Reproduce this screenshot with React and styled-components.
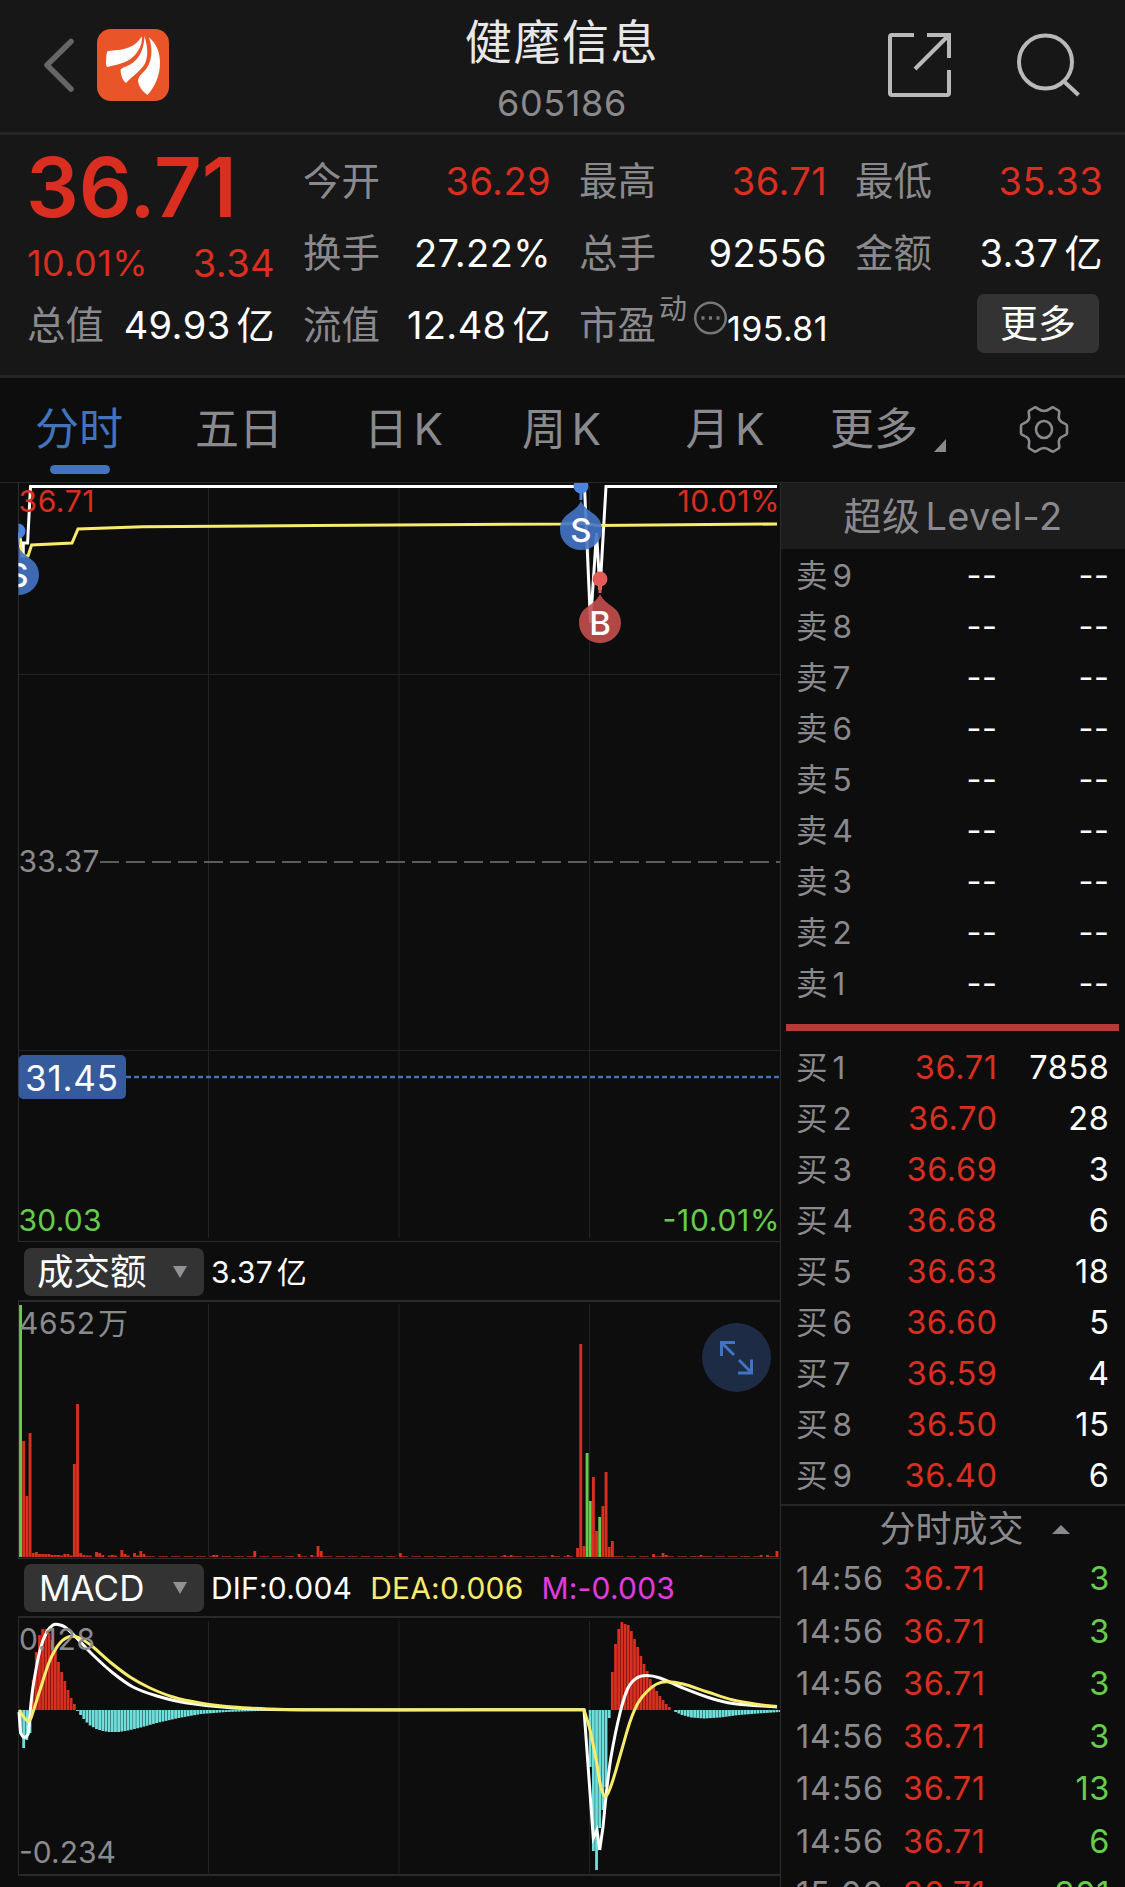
import React from "react";
import styled, { createGlobalStyle } from "styled-components";

const GlobalStyle = createGlobalStyle`
  * {
    box-sizing: border-box;
  }
  body {
    margin: 0;
    background: #0d0d0d;
    font-family: Inter, "Noto Sans CJK SC", sans-serif;
    color: #fff;
    overflow: hidden;
  }
`;

const RED = "#d92e20";
const GREEN = "#65cd4b";
const GRAY = "#8a8a8e";
const BLUE = "#4273bf";
const YELLOW = "#f9eb6c";
const CYAN = "#6fdfdc";
const GRID = "#232323";

const Screen = styled.div`
  width: 1125px;
  height: 1887px;
  overflow: hidden;
  display: flex;
  flex-direction: column;
`;

const Header = styled.header`
  height: 135px;
  flex-shrink: 0;
  display: flex;
  justify-content: space-between;
  background: #171717;
  border-bottom: 3px solid #252525;
  padding: 0 45px 0 44px;
`;
const HeaderSide = styled.div`
  width: 250px;
  display: flex;
  align-items: center;
  padding-bottom: 2px;
  justify-content: ${(props) => (props.$right ? "flex-end" : "flex-start")};
  gap: ${(props) => props.$gap}px;
`;
const TitleBox = styled.div`
  display: flex;
  flex-direction: column;
  align-items: center;
  padding-top: 12px;
`;
const Title = styled.div`
  font-size: 47px;
  line-height: 60px;
  letter-spacing: 1.6px;
  color: #e8e8e8;
`;
const Code = styled.div`
  font-size: 36px;
  line-height: 62px;
  letter-spacing: 0.6px;
  color: ${GRAY};
`;

const Quote = styled.section`
  height: 243px;
  flex-shrink: 0;
  display: grid;
  grid-template-columns: repeat(4, 248px);
  column-gap: 28px;
  background: #171717;
  border-bottom: 3px solid #252525;
  padding: 10px 0 0 27px;
`;
const QuoteColumn = styled.div`
  display: flex;
  flex-direction: column;
`;
const QuoteRow = styled.div`
  height: 72px;
  display: flex;
  align-items: center;
  justify-content: space-between;
  white-space: nowrap;
  word-spacing: -5px;
`;
const Label = styled.span`
  font-size: 38.5px;
  line-height: 72px;
  color: ${GRAY};
`;
const Value = styled.span`
  font-size: ${(props) => props.$size || 38}px;
  line-height: 72px;
  letter-spacing: 0.4px;
  color: ${(props) => props.$color || "#fff"};
`;
const BigPrice = styled.div`
  height: 84px;
  margin-left: -1px;
  font-size: 83px;
  line-height: 84px;
  font-weight: 600;
  color: ${RED};
`;
const ChangeRow = styled(QuoteRow)`
  height: 60px;
  padding-top: 7px;
`;
const Dynamic = styled.span`
  align-self: flex-start;
  font-size: 28px;
  line-height: 34px;
  padding: 3px 7px 0 3px;
  color: ${GRAY};
`;
const PeLabel = styled.div`
  display: flex;
  align-items: center;
  height: 72px;
`;
const PeValue = styled(Value)`
  font-size: 34px;
  padding-top: 7px;
`;
const MoreButton = styled.button`
  width: 122px;
  height: 59px;
  margin: 0 4px 4px auto;
  padding: 0;
  border: 0;
  border-radius: 7px;
  background: #333;
  color: #fff;
  font-family: inherit;
  font-size: 38px;
  line-height: 59px;
`;

const Tabs = styled.nav`
  height: 105px;
  flex-shrink: 0;
  display: flex;
  border-bottom: 1px solid #282828;
`;
const Tab = styled.div`
  width: ${(props) => props.$width}px;
  height: 104px;
  display: flex;
  flex-direction: column;
  align-items: center;
  padding-top: 21px;
  font-size: 44px;
  line-height: 60px;
  white-space: nowrap;
  word-spacing: -7px;
  color: ${(props) => (props.$active ? BLUE : GRAY)};
`;
const GearTab = styled(Tab)`
  justify-content: center;
  padding: 0 0 0 4px;
`;
const Underline = styled.div`
  width: 60px;
  height: 9px;
  margin: 6px 0 0 2px;
  border-radius: 5px;
  background: ${BLUE};
`;
const MoreTab = styled.div`
  display: flex;
  align-items: flex-end;
  gap: 16px;
`;
const Corner = styled.i`
  border-left: 12px solid transparent;
  border-bottom: 13px solid ${GRAY};
  margin-bottom: 7px;
`;

const Body = styled.main`
  flex: 1;
  display: flex;
  min-height: 0;
`;
const Charts = styled.section`
  width: 781px;
  border-right: 1px solid #2b2b2b;
  display: flex;
  flex-direction: column;
`;
const ChartSvg = styled.svg`
  display: block;
  flex-shrink: 0;
  font-family: Inter, "Noto Sans CJK SC", sans-serif;
`;
const ChartBox = styled.div`
  position: relative;
`;
const IndicatorBar = styled.div`
  height: ${(props) => props.$height}px;
  flex-shrink: 0;
  display: flex;
  align-items: center;
  padding: 1px 0 0 24px;
  white-space: nowrap;
  word-spacing: -5px;
`;
const Picker = styled.div`
  width: 180px;
  height: 48px;
  display: flex;
  align-items: center;
  justify-content: space-between;
  padding: 0 17px 0 ${(props) => props.$left}px;
  margin-right: 7px;
  border-radius: 7px;
  background: #333;
  font-size: ${(props) => props.$size}px;
  line-height: 48px;
`;
const Caret = styled.i`
  width: 0;
  border: 7px solid transparent;
  border-top: 12px solid #929296;
  border-bottom: 0;
`;
const Reading = styled.span`
  font-size: 30px;
  line-height: 48px;
  letter-spacing: 0.2px;
  margin-right: 18px;
  color: ${(props) => props.$color || "#fff"};
`;
const Expand = styled.button`
  position: absolute;
  right: 9px;
  top: 23px;
  width: 69px;
  height: 69px;
  padding: 0;
  border: 0;
  border-radius: 50%;
  background: #1d2b44;
  display: flex;
  align-items: center;
  justify-content: center;
`;

const Book = styled.aside`
  flex: 1;
  display: flex;
  flex-direction: column;
`;
const LevelTitle = styled.div`
  height: 66px;
  flex-shrink: 0;
  text-align: center;
  background: #1c1c1c;
  color: ${GRAY};
  font-size: 38px;
  line-height: 67px;
  letter-spacing: 0.4px;
  word-spacing: -6px;
`;
const OrderList = styled.div`
  padding-top: ${(props) => props.$top}px;
`;
const OrderRow = styled.div`
  height: 51px;
  display: grid;
  grid-template-columns: 82px 119.5px 112px;
  padding-left: 15px;
  font-size: 32.5px;
  line-height: 51px;
  letter-spacing: 0.6px;
  word-spacing: -5px;
  text-align: right;
  white-space: nowrap;
`;
const OrderName = styled.span`
  text-align: left;
  color: ${GRAY};
  font-size: 31.5px;
`;
const Price = styled.span`
  color: ${(props) => (props.$empty ? "#fff" : RED)};
`;
const Divider = styled.div`
  height: 7px;
  margin: 15px 6px 0 5px;
  flex-shrink: 0;
  background: #b93a35;
`;
const TradesTitle = styled.div`
  height: 48px;
  flex-shrink: 0;
  margin-top: 3px;
  border-top: 2px solid #262626;
  display: flex;
  align-items: center;
  justify-content: center;
  gap: 28px;
  padding: 0 0 0 43px;
  color: ${GRAY};
  font-size: 36px;
  line-height: 44px;
`;
const UpCaret = styled.i`
  border: 9px solid transparent;
  border-bottom: 9px solid ${GRAY};
  border-top: 0;
`;
const TradeRow = styled.div`
  height: 52.5px;
  flex-shrink: 0;
  display: grid;
  grid-template-columns: 107px 101px 106px;
  padding-left: 15px;
  font-size: 32.5px;
  line-height: 53px;
  letter-spacing: 0.6px;
  color: ${GREEN};
`;
const Time = styled.span`
  color: ${GRAY};
  letter-spacing: 0.9px;
`;
const Amount = styled.span`
  text-align: right;
`;

const sells = [9, 8, 7, 6, 5, 4, 3, 2, 1];
const buys = [
  ["36.71", 7858],
  ["36.70", 28],
  ["36.69", 3],
  ["36.68", 6],
  ["36.63", 18],
  ["36.60", 5],
  ["36.59", 4],
  ["36.50", 15],
  ["36.40", 6],
];
const trades = [
  ["14:56", 3],
  ["14:56", 3],
  ["14:56", 3],
  ["14:56", 3],
  ["14:56", 13],
  ["14:56", 6],
  ["15:00", 301],
];
const tabs = [
  ["五日", 162],
  ["日 K", 167],
  ["周 K", 149],
  ["月 K", 178],
];

// minute index -> bar height, anything not listed is a flat 1px bar
const volume = {
  0: 252, 1: 116, 2: 61, 3: 124, 4: 4, 5: 5, 6: 3, 7: 3, 8: 3, 9: 3, 10: 2, 11: 2,
  12: 2, 14: 3, 15: 3, 17: 93, 18: 153, 19: 4, 20: 2, 24: 5, 25: 4, 26: 2, 29: 2,
  32: 7, 33: 3, 36: 4, 38: 6, 39: 3, 61: 2, 62: 2, 74: 6, 88: 3, 92: 2, 94: 11,
  95: 6, 120: 4, 153: 2, 155: 2, 168: 2, 173: 2, 176: 9, 177: 213, 178: 11, 179: 104,
  180: 56, 181: 80, 182: 26, 183: 40, 184: 51, 185: 85, 186: 10, 187: 16, 200: 3,
  203: 4, 204: 2, 215: 2, 234: 2, 236: 2, 239: 6,
};
const greenMinutes = [0, 179, 180, 183];

// [minute, value] samples, interpolated in between
const macd = [
  [0, -24], [1, -38], [2, -30], [3, -23], [4, 30], [5, 58], [6, 75], [7, 81], [8, 81],
  [9, 77], [10, 70], [11, 60], [12, 48], [13, 38], [14, 29], [15, 20], [16, 12], [17, 6],
  [18, -1], [19, -5], [20, -9], [21, -12.5], [22, -15.5], [24, -19], [26, -21], [28, -22],
  [31, -22], [34, -20.5], [38, -17.5], [43, -13], [50, -8], [57, -4], [65, -2], [75, -1],
  [85, 0], [179, 0], [180, -57], [181, -141], [182, -160], [183, -118], [184, -100],
  [185, -77], [186, -8], [187, 38], [188, 66], [189, 81], [190, 88], [191, 86], [192, 85],
  [193, 79], [194, 71], [195, 63], [196, 54], [197, 46], [198, 39], [199, 31], [200, 25],
  [201, 19], [202, 14], [203, 10], [204, 6], [205, 3], [206, 0], [207, -2], [209, -5],
  [212, -7.5], [216, -8.5], [221, -7.5], [227, -5], [233, -3.5], [240, -2],
];

const dif = [
  [19, 1712], [20.7, 1733], [28.3, 1733.5], [30, 1713], [33, 1687], [40, 1650],
  [46.7, 1632], [53, 1625], [58, 1624.5], [65, 1627], [76.7, 1638], [93, 1655], [113, 1673],
  [133, 1687], [157, 1696], [187, 1703], [233, 1708], [290, 1709.7], [584, 1709.7],
];
const difTail = [
  [603, 1827], [606.7, 1790], [611, 1757], [620, 1713], [628, 1688], [636.7, 1678],
  [646.7, 1675.5], [660, 1678], [683, 1688], [710, 1698], [733, 1703.5], [777, 1707],
];
const dea = [
  [19, 1710], [23, 1716], [27, 1720.5], [30, 1720], [33, 1712], [40, 1690], [50, 1660],
  [60, 1643], [70, 1636.5], [80, 1638], [93, 1647], [110, 1662], [130, 1677], [150, 1688],
  [173, 1697], [200, 1703], [233, 1707], [270, 1709], [300, 1709.7], [584, 1709.7],
];
const deaTail = [
  [584, 1709.7], [590, 1730], [596.7, 1763], [600, 1783], [603.5, 1794.5], [607, 1795],
  [613, 1780], [621.7, 1750], [630, 1721.7], [638, 1703], [646.7, 1691.7], [656.7, 1684],
  [666.7, 1681.7], [683, 1684], [706.7, 1691.7], [733, 1700], [760, 1704.7], [777, 1706.5],
];

const STEP = 3.165;
const minuteX = (i) => 19.1 + i * STEP;

const macdAt = (i) => {
  const next = macd.findIndex(([m]) => m >= i);
  if (next <= 0) return macd[0][1];
  const [m1, v1] = macd[next];
  const [m0, v0] = macd[next - 1];
  return v0 + ((v1 - v0) * (i - m0)) / (m1 - m0);
};

// smooth path through the points
const curve = (points) =>
  points.reduce((d, [x, y], i) => {
    if (i === 0) return `M${x} ${y}`;
    const p0 = points[i - 2] || points[i - 1];
    const p1 = points[i - 1];
    const p3 = points[i + 1] || points[i];
    const dx = (x - p1[0]) / 3;
    const s1 = (y - p0[1]) / (x - p0[0] || 1);
    const s2 = (p3[1] - p1[1]) / (p3[0] - p1[0] || 1);
    return `${d}C${p1[0] + dx} ${p1[1] + s1 * dx} ${x - dx} ${y - s2 * dx} ${x} ${y}`;
  }, "");

const VerticalGrid = ({ top, bottom }) => (
  <>
    {[208.5, 399, 589.5].map((x) => (
      <path key={x} d={`M${x} ${top}V${bottom}`} stroke={GRID} />
    ))}
    <path d={`M18.5 ${top - 4}V${bottom + 4}`} stroke="#2b2b2b" />
  </>
);

const Marker = ({ x, y, letter, color, dot }) => (
  <g>
    <circle cx={x} cy={y - 44} r="7.5" fill={dot} />
    <path d={`M${x} ${y - 38}V${y - 30}`} stroke={dot} strokeWidth="3" />
    <path
      d={`M${x} ${y - 29}C${x + 6} ${y - 16} ${x + 21} ${y - 17} ${x + 21} ${y}A21 20 0 0 1 ${x - 21} ${y}C${x - 21} ${y - 17} ${x - 6} ${y - 16} ${x} ${y - 29}Z`}
      fill={color}
      fillOpacity="0.9"
    />
    <text x={x} y={y + 12} fontSize="33" fontWeight="500" fill="#fff" textAnchor="middle">
      {letter}
    </text>
  </g>
);

const PriceChart = () => (
  <ChartSvg width="780" height="759" viewBox="0 483 780 759">
    <defs>
      <clipPath id="plot">
        <rect x="18.5" y="483" width="762" height="759" />
      </clipPath>
    </defs>
    <VerticalGrid top={487} bottom={1238} />
    <path d="M18 674.5H780M18 1050.5H780" stroke={GRID} />
    <path d="M18 1241.5H780" stroke="#2b2b2b" />
    <path d="M100 862H780" stroke="#77777a" strokeWidth="1.5" strokeDasharray="19 7" />
    <path d="M126 1077H780" stroke={BLUE} strokeWidth="2.5" strokeDasharray="5 3" />
    <g clipPath="url(#plot)" fill="none" strokeWidth="3">
      <path d="M19 532L23.3 556V543H27.6L30.5 486.5H584.5L590.5 623L596.5 533L600 590L606 486.5H777" stroke="#fff" />
      <path d="M19 536L22 556H28L31.6 545L72 543L78 529L143 526.7L316 525.5L563 524L584 523L597 525.5L777 524" stroke={YELLOW} />
      <Marker x={581} y={530} letter="S" color="#4474c6" dot="#4a83e0" />
      <Marker x={600} y={623} letter="B" color="#c34e4c" dot="#e25b59" />
      <Marker x={18} y={575} letter="S" color="#4474c6" dot="#4a83e0" />
    </g>
    <g fontSize="30">
      <text x="18.5" y="512" fill={RED} textLength="76">36.71</text>
      <text x="779.5" y="512" fill={RED} textAnchor="end" textLength="102">10.01%</text>
      <text x="18.5" y="872" fill={GRAY} textLength="81">33.37</text>
      <text x="18.5" y="1231" fill={GREEN} textLength="83">30.03</text>
      <text x="779.5" y="1231" fill={GREEN} textAnchor="end" textLength="117">-10.01%</text>
    </g>
    <rect x="18.5" y="1055" width="107.5" height="44" rx="5" fill="#365b9c" />
    <text x="25" y="1091" fontSize="35" fill="#fff" textLength="93">31.45</text>
  </ChartSvg>
);

const VolumeChart = () => (
  <ChartSvg width="780" height="259" viewBox="0 1300 780 259">
    <path d="M18 1301H780" stroke="#292929" strokeWidth="2" />
    <VerticalGrid top={1304} bottom={1556} />
    {Array.from({ length: 240 }, (_, i) => {
      const height = volume[i] || (i % 4 === 3 ? 0 : i < 40 ? 1.5 : 0.7);
      return (
        <rect
          key={i}
          x={minuteX(i)}
          y={1557 - height}
          width="2.9"
          height={height}
          fill={greenMinutes.includes(i) ? GREEN : RED}
        />
      );
    })}
    <path d="M18 1558.5H780" stroke="#2b2b2b" />
    <text x="19" y="1334" fontSize="30" fill={GRAY} letterSpacing="0.5" wordSpacing="-6.5">4652 万</text>
  </ChartSvg>
);

const MacdChart = () => (
  <ChartSvg width="780" height="260" viewBox="0 1616 780 260">
    <path d="M18 1617H780" stroke="#292929" strokeWidth="2" />
    <VerticalGrid top={1621} bottom={1873} />
    {Array.from({ length: 241 }, (_, i) => {
      const value = macdAt(i);
      return (
        <rect
          key={i}
          x={minuteX(i)}
          y={value > 0 ? 1710 - value : 1710}
          width="2.8"
          height={Math.abs(value)}
          fill={value > 0 ? RED : CYAN}
        />
      );
    })}
    <g fill="none" strokeWidth="3">
      <path d={`${curve(dif)}L593.3 1838L597 1830L599.7 1850`} stroke="#fff" />
      <path d={`M599.7 1850L603 1827${curve(difTail).slice(curve(difTail).indexOf("C"))}`} stroke="#fff" />
      <path d={curve(dea) + curve(deaTail)} stroke={YELLOW} />
    </g>
    <path d="M18 1875H780" stroke="#292929" strokeWidth="2" />
    <text x="19" y="1650" fontSize="30" fill={GRAY} textLength="76">0.128</text>
    <text x="19" y="1863" fontSize="30" fill={GRAY} textLength="97">-0.234</text>
  </ChartSvg>
);

const Logo = () => (
  <svg width="72" height="72" viewBox="0 0 72 72">
    <rect width="72" height="72" rx="14" fill="#ea5429" />
    <g fill="#fff">
      <path d="M11 22C25 21 37 20 44.5 7.5C46 13 43 20 38 26C33 32 24 35 10.5 38Q8.5 38 9.2 30Q9.5 22 11 22Z" />
      <path d="M47.5 7C49 13 52 22 49 32C46 41 36 46 29 54Q24 50 23.5 41Q24 39 29 37.5C41 33 47 22 47.5 7Z" />
      <path d="M52 8.5C60 15 63 24 63 34C63 46 58 58 50.5 66Q42 60 41 52Q41 48 46 43.5C56 34 56 20 52 8.5Z" />
    </g>
  </svg>
);

const Gear = () => (
  <svg width="50" height="50" viewBox="0 0 50 50" fill="none" stroke={GRAY} strokeWidth="2.6" strokeLinejoin="round">
    <path d="M15.5 2.5C18 1.5 19.5 6 25 6S32 1.5 34.500 2.500L39.5 5.5C42 7.5 38 11 40.5 15S48 18 48 21V28C48 31 43 30 40.5 34S42 41.5 39.5 43.5L34.5 46.5C32 47.5 30.5 43 25 43S18 47.5 15.5 46.5L10.5 43.5C8 41.5 12 38 9.5 34S2 31 2 28V21C2 18 7 19 9.5 15S8 7.5 10.5 5.5Z" />
    <ellipse cx="25" cy="24.5" rx="8" ry="8.5" />
  </svg>
);

const App = () => {
  return (
    <>
      <GlobalStyle />
      <Screen>
        <Header>
          <HeaderSide $gap={22}>
            <svg width="31" height="54" viewBox="0 0 31 54" fill="none" stroke="#666" strokeWidth="5.5" strokeLinecap="round" strokeLinejoin="round">
              <path d="M27 3.5L3 27L27 51" />
            </svg>
            <Logo />
          </HeaderSide>
          <TitleBox>
            <Title>健麾信息</Title>
            <Code>605186</Code>
          </TitleBox>
          <HeaderSide $right $gap={64}>
            <svg width="64" height="64" viewBox="0 0 64 64" fill="none" stroke="#b9b9b9" strokeWidth="4">
              <path d="M26 2H4Q2 2 2 4V60Q2 62 4 62H59Q61 62 61 60V37M39 2H61V25M61 2L27 36" />
            </svg>
            <svg width="64" height="64" viewBox="0 0 64 64" fill="none" stroke="#b9b9b9" strokeWidth="4">
              <circle cx="29.5" cy="29" r="26.5" />
              <path d="M47.5 48L62.5 62" />
            </svg>
          </HeaderSide>
        </Header>

        <Quote>
          <QuoteColumn>
            <BigPrice>36.71</BigPrice>
            <ChangeRow>
              <Value $size={36} $color={RED}>10.01%</Value>
              <Value $color={RED}>3.34</Value>
            </ChangeRow>
            <QuoteRow>
              <Label>总值</Label>
              <Value>49.93 亿</Value>
            </QuoteRow>
          </QuoteColumn>
          <QuoteColumn>
            <QuoteRow>
              <Label>今开</Label>
              <Value $color={RED}>36.29</Value>
            </QuoteRow>
            <QuoteRow>
              <Label>换手</Label>
              <Value>27.22%</Value>
            </QuoteRow>
            <QuoteRow>
              <Label>流值</Label>
              <Value>12.48 亿</Value>
            </QuoteRow>
          </QuoteColumn>
          <QuoteColumn>
            <QuoteRow>
              <Label>最高</Label>
              <Value $color={RED}>36.71</Value>
            </QuoteRow>
            <QuoteRow>
              <Label>总手</Label>
              <Value>92556</Value>
            </QuoteRow>
            <QuoteRow>
              <PeLabel>
                <Label>市盈</Label>
                <Dynamic>动</Dynamic>
                <svg width="33" height="49" viewBox="0 0 33 49" fill="none" stroke="#777" strokeWidth="2.5">
                  <circle cx="16.5" cy="17" r="15.3" />
                  <path d="M7.5 17H10.5M15 17H18M22.5 17H25.5" strokeWidth="3.5" />
                </svg>
              </PeLabel>
              <PeValue>195.81</PeValue>
            </QuoteRow>
          </QuoteColumn>
          <QuoteColumn>
            <QuoteRow>
              <Label>最低</Label>
              <Value $color={RED}>35.33</Value>
            </QuoteRow>
            <QuoteRow>
              <Label>金额</Label>
              <Value>3.37 亿</Value>
            </QuoteRow>
            <QuoteRow>
              <MoreButton>更多</MoreButton>
            </QuoteRow>
          </QuoteColumn>
        </Quote>

        <Tabs>
          <Tab $width={158} $active>
            分时
            <Underline />
          </Tab>
          {tabs.map(([name, width]) => (
            <Tab key={name} $width={width}>{name}</Tab>
          ))}
          <Tab $width={148}>
            <MoreTab>
              更多
              <Corner />
            </MoreTab>
          </Tab>
          <GearTab $width={160}>
            <Gear />
          </GearTab>
        </Tabs>

        <Body>
          <Charts>
            <PriceChart />
            <IndicatorBar $height={58}>
              <Picker $size={36.5} $left={13}>
                成交额
                <Caret />
              </Picker>
              <Reading>3.37 亿</Reading>
            </IndicatorBar>
            <ChartBox>
              <VolumeChart />
              <Expand>
                <svg width="35" height="35" viewBox="0 0 35 35" fill="none" stroke={BLUE} strokeWidth="3">
                  <path d="M16 2.5H2.5V16M3 3L15 15M19 33H32.5V19.5M32 32L20 20" />
                </svg>
              </Expand>
            </ChartBox>
            <IndicatorBar $height={57}>
              <Picker $size={35} $left={15}>
                MACD
                <Caret />
              </Picker>
              <Reading>DIF:0.004</Reading>
              <Reading $color={YELLOW}>DEA:0.006</Reading>
              <Reading $color="#e13be0">M:-0.003</Reading>
            </IndicatorBar>
            <MacdChart />
          </Charts>

          <Book>
            <LevelTitle>超级 Level-2</LevelTitle>
            <OrderList $top={1}>
              {sells.map((n) => (
                <OrderRow key={n}>
                  <OrderName>卖 {n}</OrderName>
                  <Price $empty>--</Price>
                  <span>--</span>
                </OrderRow>
              ))}
            </OrderList>
            <Divider />
            <OrderList $top={11}>
              {buys.map(([price, amount], i) => (
                <OrderRow key={price}>
                  <OrderName>买 {i + 1}</OrderName>
                  <Price>{price}</Price>
                  <span>{amount}</span>
                </OrderRow>
              ))}
            </OrderList>
            <TradesTitle>
              分时成交
              <UpCaret />
            </TradesTitle>
            {trades.map(([time, amount], i) => (
              <TradeRow key={i}>
                <Time>{time}</Time>
                <Price>36.71</Price>
                <Amount>{amount}</Amount>
              </TradeRow>
            ))}
          </Book>
        </Body>
      </Screen>
    </>
  );
};

export default App;
